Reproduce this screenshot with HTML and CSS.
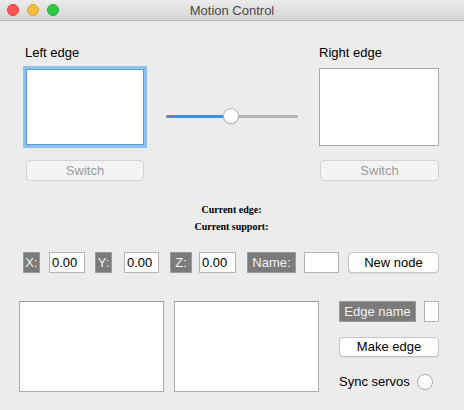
FILE: index.html
```html
<!DOCTYPE html>
<html>
<head>
<meta charset="utf-8">
<title>Motion Control</title>
<link rel="stylesheet" href="styles.css">
</head>
<body>
<div class="window">
  <div class="titlebar">
    <div class="lights">
      <span class="light red"></span>
      <span class="light yellow"></span>
      <span class="light green"></span>
    </div>
    <div class="title">Motion Control</div>
  </div>

  <div class="edges">
    <div class="edge-col left-col">
      <div class="edge-label">Left edge</div>
      <div class="edge-box focused"></div>
      <button class="switch-btn left-switch">Switch</button>
    </div>
    <div class="slider">
      <div class="track-fill"></div>
      <div class="track-rest"></div>
      <div class="thumb"></div>
    </div>
    <div class="edge-col right-col">
      <div class="edge-label">Right edge</div>
      <div class="edge-box plain"></div>
      <button class="switch-btn right-switch">Switch</button>
    </div>
  </div>

  <div class="status">
    <div>Current edge:</div>
    <div>Current support:</div>
  </div>

  <div class="node-row">
    <span class="tag tag-x">X:</span>
    <span class="field f-x">0.00</span>
    <span class="tag tag-y">Y:</span>
    <span class="field f-y">0.00</span>
    <span class="tag tag-z">Z:</span>
    <span class="field f-z">0.00</span>
    <span class="tag tag-name">Name:</span>
    <span class="field f-name"></span>
    <button class="btn new-node">New node</button>
  </div>

  <div class="bottom">
    <div class="list-box box-a"></div>
    <div class="list-box box-b"></div>
    <div class="side">
      <div class="edge-name-row">
        <span class="tag tag-edge">Edge name</span>
        <span class="field f-edge"></span>
      </div>
      <button class="btn make-edge">Make edge</button>
      <div class="sync-row">
        <span class="sync-label">Sync servos</span>
        <span class="radio"></span>
      </div>
    </div>
  </div>
</div>
</body>
</html>
```

FILE: styles.css
```css
* { box-sizing: border-box; }
html, body {
  margin: 0;
  padding: 0;
  width: 464px;
  height: 410px;
  overflow: hidden;
  background: #ececec;
  font-family: "Liberation Sans", Arial, sans-serif;
  font-size: 13px;
  color: #000;
}
.window {
  width: 464px;
  height: 410px;
  background: #ececec;
}
.titlebar {
  position: relative;
  height: 21px;
  background: linear-gradient(#ebebeb, #d6d6d6);
  border-bottom: 1px solid #b4b4b4;
  display: flex;
  align-items: center;
  justify-content: center;
}
.lights {
  position: absolute;
  left: 7px;
  top: 4px;
  display: flex;
  gap: 8px;
}
.light {
  width: 12px;
  height: 12px;
  border-radius: 50%;
  display: block;
}
.red { background: #fc5753; border: 1px solid #df3d39; }
.yellow { background: #fdbc40; border: 1px solid #dea033; }
.green { background: #33c748; border: 1px solid #27aa35; }
.title {
  font-size: 13px;
  color: #4a4a4a;
  line-height: 16px;
  margin-top: 1px;
}

/* edges */
.edges {
  display: flex;
  align-items: flex-start;
  padding-top: 24px;
}
.edge-col {
  display: flex;
  flex-direction: column;
}
.left-col { margin-left: 23px; width: 124px; }
.right-col { margin-left: 21px; width: 121px; }
.edge-label {
  line-height: 16px;
  height: 16px;
  margin-left: 2px;
}
.right-col .edge-label { margin-left: 0; }
.edge-box { background: #fff; }
.edge-box.focused {
  margin-top: 5px;
  width: 124px;
  height: 82px;
  border: 1px solid #5c98d6;
  box-shadow: inset 0 0 0 2px #8fc0f2;
  border-color: #8fc0f2;
  position: relative;
}
.edge-box.focused::after {
  content: "";
  position: absolute;
  left: 2px; top: 2px; right: 2px; bottom: 2px;
  border: 1px solid #5f9ad6;
}
.edge-box.plain {
  margin-top: 7px;
  width: 120px;
  height: 78px;
  border: 1px solid #a9a9a9;
}
.switch-btn {
  font-family: "Liberation Sans", Arial, sans-serif;
  font-size: 13px;
  color: #9a9a9a;
  background: #f4f4f4;
  border: 1px solid #d3d3d3;
  border-radius: 4px;
  height: 21px;
  padding: 0;
  line-height: 19px;
}
.left-switch { margin-top: 12px; margin-left: 3px; width: 118px; }
.right-switch { margin-top: 14px; margin-left: 1px; width: 119px; }

/* slider */
.slider {
  position: relative;
  margin-left: 19px;
  margin-top: 63px;
  width: 132px;
  height: 16px;
  display: flex;
  align-items: center;
}
.track-fill {
  width: 65px;
  height: 3px;
  background: #3b93e6;
  border-radius: 2px 0 0 2px;
}
.track-rest {
  flex: 1;
  height: 3px;
  background: #b5b5b5;
  border-radius: 0 2px 2px 0;
}
.thumb {
  position: absolute;
  left: 57px;
  top: 0;
  width: 16px;
  height: 16px;
  border-radius: 50%;
  background: #fff;
  border: 1px solid #b8b8b8;
  box-shadow: 0 0.5px 1px rgba(0,0,0,0.15);
}

/* status */
.status {
  margin-top: 20px;
  text-align: center;
  padding-right: 1px;
  font-family: "Liberation Serif", "Times New Roman", serif;
  font-weight: bold;
  font-size: 10px;
  line-height: 17px;
  color: #000;
}

/* node row */
.node-row {
  margin-top: 17px;
  display: flex;
  align-items: center;
  height: 21px;
  padding-left: 23px;
}
.tag {
  display: inline-flex;
  align-items: center;
  justify-content: center;
  height: 21px;
  background: #7b7b7b;
  border: 1px solid #9a9a9a;
  color: #f2f2f2;
  font-size: 13px;
  line-height: 19px;
}
.field {
  display: inline-flex;
  align-items: center;
  height: 21px;
  background: #fff;
  border: 1px solid #b4b4b4;
  padding-left: 2px;
  font-size: 13px;
  color: #000;
}
.tag-x { width: 17px; }
.f-x { margin-left: 9px; width: 36px; }
.tag-y { margin-left: 10px; width: 17px; }
.f-y { margin-left: 12px; width: 35px; }
.tag-z { margin-left: 11px; width: 22px; }
.f-z { margin-left: 7px; width: 37px; }
.tag-name { margin-left: 11px; width: 49px; }
.f-name { margin-left: 8px; width: 35px; }
.btn {
  font-family: "Liberation Sans", Arial, sans-serif;
  font-size: 13px;
  color: #000;
  background: #fff;
  border: 1px solid #c4c4c4;
  border-radius: 4px;
  padding: 0;
  box-shadow: 0 0.5px 0.5px rgba(0,0,0,0.12);
}
.new-node { margin-left: 9px; width: 91px; height: 21px; line-height: 19px; }

/* bottom */
.bottom {
  margin-top: 28px;
  display: flex;
  align-items: flex-start;
  padding-left: 19px;
}
.list-box {
  width: 145px;
  height: 91px;
  background: #fff;
  border: 1px solid #acacac;
  border-top-color: #979797;
}
.box-b { margin-left: 10px; }
.side {
  margin-left: 20px;
  width: 100px;
  display: flex;
  flex-direction: column;
}
.edge-name-row {
  display: flex;
  height: 21px;
}
.tag-edge { width: 77px; }
.f-edge { margin-left: 8px; width: 15px; }
.make-edge { margin-top: 15px; width: 100px; height: 20px; line-height: 18px; }
.sync-row {
  margin-top: 16px;
  display: flex;
  align-items: center;
  height: 17px;
}
.sync-label { line-height: 16px; }
.radio {
  margin-left: 7px;
  width: 16px;
  height: 16px;
  border-radius: 50%;
  background: #fff;
  border: 1px solid #a9a9a9;
}
```
